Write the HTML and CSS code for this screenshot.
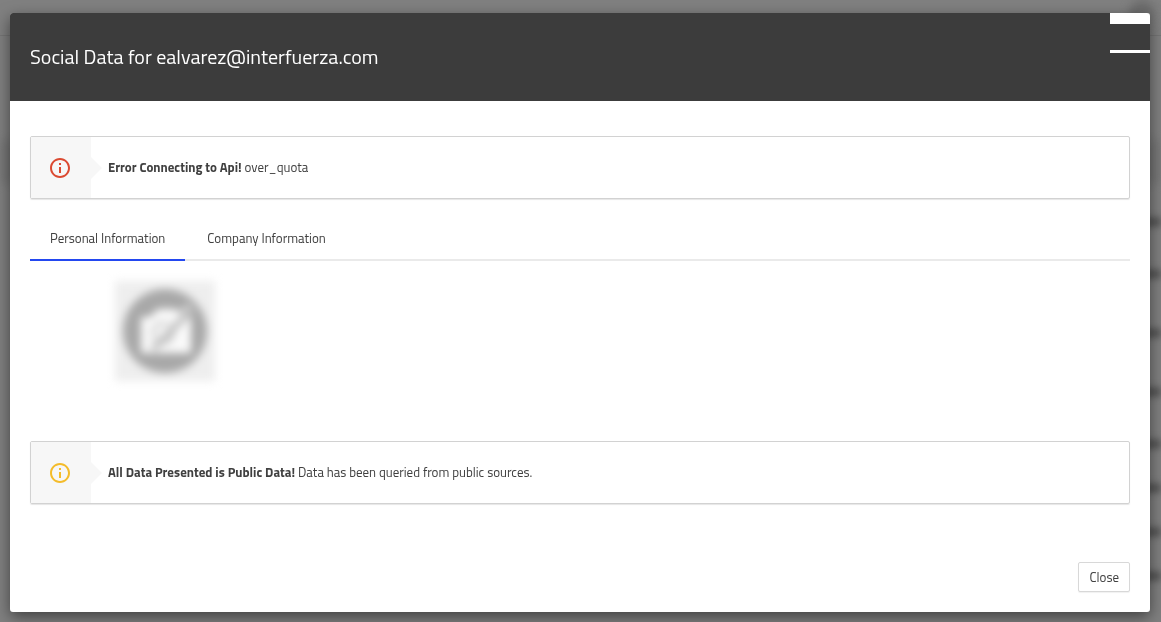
FILE: index.html
```html
<!DOCTYPE html>
<html lang="en">
<head>
    <meta charset="UTF-8">
    <meta name="viewport" content="width=device-width, initial-scale=1.0">
    <title>Social Data</title>
    <link rel="stylesheet" href="styles.css">
</head>
<body>
    <!-- page behind the dialog -->
    <div class="backdrop" aria-hidden="true">
        <div class="page-top"><span class="avatar"></span></div>
        <div class="page-band"></div>
        <div class="page-rows">
            <span class="row"></span>
            <span class="row tall"></span>
            <span class="row tall"></span>
            <span class="row"></span>
            <span class="row short"></span>
            <span class="row short"></span>
            <span class="row short"></span>
            <span class="row short"></span>
        </div>
    </div>

    <div class="modal" role="dialog" aria-labelledby="modalTitle">
        <header class="modal-header">
            <h3 id="modalTitle">Social Data for ealvarez@interfuerza.com</h3>
            <button type="button" class="modal-x" aria-label="Close dialog"></button>
        </header>

        <main class="modal-body">
            <div class="alert alert-danger" role="alert">
                <div class="alert-icon">
                    <svg viewBox="0 0 24 24" width="24" height="24" fill="currentColor">
                        <path d="M11 17h2v-6h-2v6zm1-15C6.48 2 2 6.48 2 12s4.48 10 10 10 10-4.48 10-10S17.52 2 12 2zm0 18c-4.41 0-8-3.59-8-8s3.59-8 8-8 8 3.59 8 8-3.59 8-8 8zM11 9h2V7h-2v2z"/>
                    </svg>
                </div>
                <p><strong>Error Connecting to Api!</strong> over_quota</p>
            </div>

            <nav class="tabs">
                <a href="#personal" class="active">Personal Information</a>
                <a href="#company">Company Information</a>
            </nav>

            <section id="personal" class="tab-content">
                <svg class="photo" viewBox="0 0 100 100" width="100" height="100" role="img" aria-label="No photo">
                    <rect width="100" height="100" fill="#eee"/>
                    <circle cx="50" cy="50" r="42" fill="#a8a8a8"/>
                    <path d="M26 36h9l8-8h18l6 8h9v36H26z" fill="#fafafa"/>
                    <circle cx="48" cy="52" r="10" fill="none" stroke="#d0d0d0" stroke-width="4"/>
                    <path d="M38 68L80 26" stroke="#bbb" stroke-width="6"/>
                    <path d="M30 68L74 24" stroke="#f2f2f2" stroke-width="3"/>
                </svg>
            </section>

            <div class="alert alert-warning" role="alert">
                <div class="alert-icon">
                    <svg viewBox="0 0 24 24" width="24" height="24" fill="currentColor">
                        <path d="M11 17h2v-6h-2v6zm1-15C6.48 2 2 6.48 2 12s4.48 10 10 10 10-4.48 10-10S17.52 2 12 2zm0 18c-4.41 0-8-3.59-8-8s3.59-8 8-8 8 3.59 8 8-3.59 8-8 8zM11 9h2V7h-2v2z"/>
                    </svg>
                </div>
                <p><strong>All Data Presented is Public Data!</strong> Data has been queried from public sources.</p>
            </div>
        </main>

        <footer class="modal-footer">
            <button type="button" class="btn">Close</button>
        </footer>
    </div>
</body>
</html>
```

FILE: styles.css
```css
* {
    box-sizing: border-box;
}

body {
    margin: 0;
    padding: 13px 11px 10px 10px;
    font-family: "Titillium Web", Roboto, sans-serif;
    font-size: 13px;
    line-height: 20px;
    color: #404040;
    background: #808080;
}

/* page behind */
.backdrop {
    position: fixed;
    inset: 0;
    overflow: hidden;
    background: #808080;
}

.page-top {
    display: flex;
    justify-content: flex-end;
    height: 36px;
    border-bottom: 1px solid #757575;
}

.avatar {
    width: 26px;
    height: 26px;
    margin-right: 6px;
    border-radius: 50%;
    background: #6c6c6c;
    filter: blur(4px);
}

.page-band {
    height: 44px;
    margin-top: 104px;
    background: #777;
    filter: blur(4px);
}

.page-rows {
    display: flex;
    flex-direction: column;
    align-items: flex-end;
    padding-top: 33px;
}

.row {
    width: 100%;
    height: 10px;
    margin-bottom: 42px;
    background: linear-gradient(to left, #585858 40px, transparent 40px);
    filter: blur(3px);
}

.row.tall {
    margin-bottom: 49px;
}

.row.short {
    margin-bottom: 34px;
}

/* modal */
.modal {
    position: relative;
    background: #fff;
    border-radius: 3px;
    box-shadow: 0 5px 15px rgba(0, 0, 0, 0.5);
}

.modal-header {
    position: relative;
    padding: 29px 20px;
    border-radius: 3px 3px 0 0;
    background: #3c3c3c;
    overflow: hidden;
}

.modal-header h3 {
    margin: 0;
    font-size: 20px;
    line-height: 30px;
    font-weight: 400;
    color: #fff;
}

.modal-x {
    position: absolute;
    top: 0;
    right: 0;
    width: 40px;
    height: 40px;
    padding: 0;
    border: solid #fff;
    border-width: 11px 0 3px;
    background: transparent;
    cursor: pointer;
}

.modal-body {
    padding: 35px 20px 28px;
}

.alert {
    position: relative;
    display: flex;
    align-items: center;
    border: 1px solid #d2d2d2;
    border-radius: 2px;
    box-shadow: 0 1px 1px rgba(0, 0, 0, 0.1);
}

.alert-icon {
    position: relative;
    display: flex;
    align-items: center;
    justify-content: center;
    width: 60px;
    height: 61px;
    padding-right: 2px;
    background: #f7f7f7;
}

.alert-icon::after {
    content: "";
    position: absolute;
    left: 100%;
    border: 11px solid transparent;
    border-left-color: #f7f7f7;
    border-right-width: 0;
}

.alert-danger .alert-icon {
    color: #db4a32;
}

.alert-warning .alert-icon {
    color: #f4bc2b;
}

.alert p {
    margin: 0;
    padding: 0 17px 2px;
}

.tabs {
    display: flex;
    gap: 2px;
    margin-top: 19px;
    border-bottom: 2px solid #eaeaea;
}

.tabs a {
    margin-bottom: -2px;
    padding: 10px 20px 11px;
    border-bottom: 2px solid transparent;
    color: #404040;
    text-decoration: none;
}

.tabs a.active {
    border-bottom-color: #2348f0;
}

.tab-content {
    padding: 20px 85px 60px;
}

.photo {
    display: block;
    filter: blur(4px);
}

.modal-footer {
    display: flex;
    justify-content: flex-end;
    padding: 30px 20px 20px;
}

.btn {
    padding: 4px 10px;
    border: 1px solid #d8d8d8;
    border-radius: 2px;
    box-shadow: 0 1px 1px rgba(0, 0, 0, 0.06);
    font: inherit;
    color: #404040;
    background: #fff;
    cursor: pointer;
}
```
